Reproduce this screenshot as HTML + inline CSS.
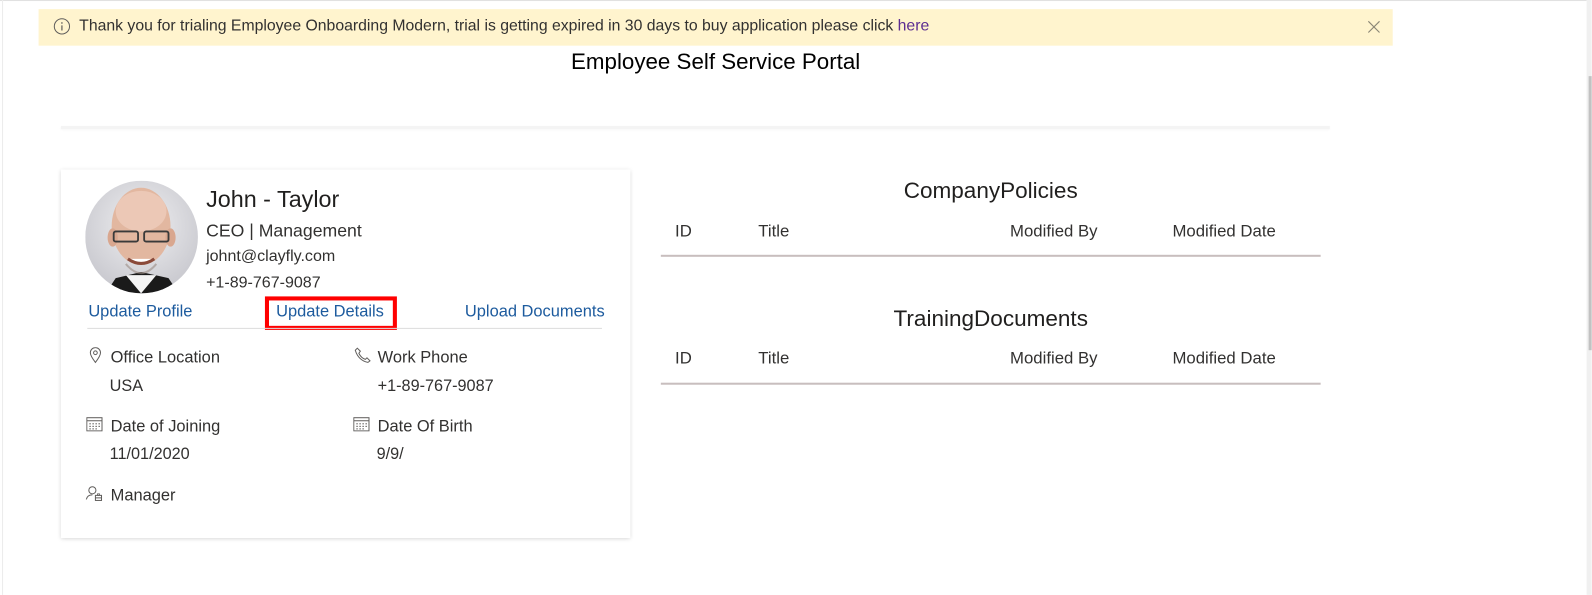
<!DOCTYPE html>
<html><head><meta charset="utf-8"><style>
*{margin:0;padding:0;box-sizing:border-box}
body{width:1592px;height:595px;background:#fff;font-family:"Liberation Sans",sans-serif;color:#323130;position:relative;overflow:hidden}
#w{position:absolute;left:0;top:0;width:1568px;height:586px;transform:scale(1.0151);transform-origin:0 0}
.a{position:absolute;white-space:nowrap}
.lnk{color:#1d5b9e;font-size:16.2px}
.lbl{font-size:16.2px;color:#323130}
.val{font-size:16px;color:#323130}
.th{font-size:16.5px;color:#323130}
</style></head><body><div id="w">
<div class="a" style="left:0;top:0;width:1563px;height:1px;background:#e1e1e1"></div>
<div class="a" style="left:2px;top:0;width:1px;height:586px;background:#ececec"></div>
<div class="a" style="left:1563px;top:0;width:5px;height:586px;background:#f0f0f0"></div>
<div class="a" style="left:1565px;top:75px;width:3px;height:270px;background:#c2c2c2"></div>

<div class="a" style="left:38px;top:9px;width:1334px;height:36px;background:#fff4ce"></div>
<svg class="a" style="left:52px;top:17px" width="18" height="18" viewBox="0 0 18 18"><circle cx="9" cy="9" r="7.5" fill="none" stroke="#605e5c" stroke-width="1"/><line x1="9" y1="8" x2="9" y2="13" stroke="#605e5c" stroke-width="1.2"/><circle cx="9" cy="5.6" r=".8" fill="#605e5c"/></svg>
<div class="a" style="left:78px;top:17px;font-size:15.55px;color:#323130">Thank you for trialing Employee Onboarding Modern, trial is getting expired in 30 days to buy application please click <span style="color:#5c2d91">here</span></div>
<svg class="a" style="left:1347px;top:20px" width="13" height="13" viewBox="0 0 13 13"><path d="M1 1L12 12M12 1L1 12" stroke="#8a8676" stroke-width="1.1"/></svg>

<div class="a" style="left:0;width:1410px;top:48px;text-align:center;font-size:22px;color:#000">Employee Self Service Portal</div>
<div class="a" style="left:60px;top:124px;width:1250px;height:3px;background:#f4f4f4;box-shadow:0 1px 2px rgba(0,0,0,.04)"></div>

<div class="a" style="left:60px;top:167px;width:561px;height:363px;background:#fff;box-shadow:0 1px 4px rgba(0,0,0,.18)"></div>
<svg class="a" style="left:84px;top:178px" width="111" height="111" viewBox="0 0 111 111">
<defs><clipPath id="c"><circle cx="55.5" cy="55.5" r="55.5"/></clipPath><radialGradient id="g" cx="50%" cy="40%" r="60%"><stop offset="0" stop-color="#f0f0f2"/><stop offset="1" stop-color="#c9c9cf"/></radialGradient></defs>
<g clip-path="url(#c)"><rect width="111" height="111" fill="url(#g)"/>
<path d="M20 111L30 96L55 90L82 96L92 111Z" fill="#1a1a1a"/>
<path d="M40 93L55 111L70 93Z" fill="#f4f4f4"/>
<ellipse cx="55" cy="45" rx="29" ry="38" fill="#e2b7a0"/>
<ellipse cx="55" cy="30" rx="25" ry="20" fill="#ecc8b6"/>
<ellipse cx="27" cy="56" rx="5" ry="9" fill="#d9a78f"/><ellipse cx="84" cy="56" rx="5" ry="9" fill="#d9a78f"/>
<rect x="28" y="50" width="24" height="10" rx="2" fill="none" stroke="#3a3a3a" stroke-width="1.8"/><rect x="58" y="50" width="24" height="10" rx="2" fill="none" stroke="#3a3a3a" stroke-width="1.8"/>
<path d="M42 77Q55 86 68 77" stroke="#8a4a3a" stroke-width="3" fill="#fff"/>
<path d="M40 82Q55 100 70 82" stroke="#9b8c84" stroke-width="2" fill="none" opacity=".6"/></g></svg>
<div class="a" style="left:203px;top:183px;font-size:23px;color:#201f1e">John - Taylor</div>
<div class="a" style="left:203px;top:217px;font-size:17.4px;color:#323130">CEO | Management</div>
<div class="a" style="left:203px;top:244px;font-size:15.8px;color:#323130">johnt@clayfly.com</div>
<div class="a" style="left:203px;top:270px;font-size:15.8px;color:#323130">+1-89-767-9087</div>
<div class="a lnk" style="left:87px;top:298px">Update Profile</div>
<div class="a lnk" style="left:272px;top:298px">Update Details</div>
<div class="a lnk" style="left:458px;top:298px">Upload Documents</div>
<div class="a" style="left:261px;top:292px;width:130px;height:33px;border:4px solid #f00"></div>
<div class="a" style="left:86px;top:323px;width:507px;height:1px;background:#dcdcdc"></div>

<svg class="a" style="left:87px;top:342px" width="14" height="16" viewBox="0 0 14 16"><path d="M7 15C7 15 2 8.5 2 5.5A5 5 0 0 1 12 5.5C12 8.5 7 15 7 15Z" fill="none" stroke="#605e5c" stroke-width="1"/><circle cx="7" cy="5.5" r="1.8" fill="none" stroke="#605e5c"/></svg>
<div class="a lbl" style="left:109px;top:343px">Office Location</div>
<div class="a val" style="left:108px;top:372px">USA</div>
<svg class="a" style="left:348px;top:342px" width="18" height="16" viewBox="0 0 18 16"><path d="M4 1L7 4L5.5 6Q8 11 12 12L13.5 10.5L16.5 13.5L14.5 15Q5 13 2 3Z" fill="none" stroke="#605e5c" stroke-width="1"/></svg>
<div class="a lbl" style="left:372px;top:343px">Work Phone</div>
<div class="a val" style="left:372px;top:372px">+1-89-767-9087</div>

<svg class="a" style="left:85px;top:410px" width="16" height="15" viewBox="0 0 16 15"><rect x=".5" y="1.5" width="15" height="13" fill="none" stroke="#605e5c"/><line x1=".5" y1="4.5" x2="15.5" y2="4.5" stroke="#605e5c"/><g fill="#605e5c"><rect x="3" y="7" width="1.5" height="1"/><rect x="6" y="7" width="1.5" height="1"/><rect x="9" y="7" width="1.5" height="1"/><rect x="12" y="7" width="1.5" height="1"/><rect x="3" y="9.5" width="1.5" height="1"/><rect x="6" y="9.5" width="1.5" height="1"/><rect x="9" y="9.5" width="1.5" height="1"/><rect x="12" y="9.5" width="1.5" height="1"/><rect x="3" y="12" width="1.5" height="1"/><rect x="6" y="12" width="1.5" height="1"/><rect x="9" y="12" width="1.5" height="1"/></g></svg>
<div class="a lbl" style="left:109px;top:411px">Date of Joining</div>
<div class="a val" style="left:108px;top:439px">11/01/2020</div>
<svg class="a" style="left:348px;top:410px" width="16" height="15" viewBox="0 0 16 15"><rect x=".5" y="1.5" width="15" height="13" fill="none" stroke="#605e5c"/><line x1=".5" y1="4.5" x2="15.5" y2="4.5" stroke="#605e5c"/><g fill="#605e5c"><rect x="3" y="7" width="1.5" height="1"/><rect x="6" y="7" width="1.5" height="1"/><rect x="9" y="7" width="1.5" height="1"/><rect x="12" y="7" width="1.5" height="1"/><rect x="3" y="9.5" width="1.5" height="1"/><rect x="6" y="9.5" width="1.5" height="1"/><rect x="9" y="9.5" width="1.5" height="1"/><rect x="12" y="9.5" width="1.5" height="1"/><rect x="3" y="12" width="1.5" height="1"/><rect x="6" y="12" width="1.5" height="1"/><rect x="9" y="12" width="1.5" height="1"/></g></svg>
<div class="a lbl" style="left:372px;top:411px">Date Of Birth</div>
<div class="a val" style="left:371px;top:439px">9/9/</div>

<svg class="a" style="left:84px;top:478px" width="18" height="16" viewBox="0 0 18 16"><circle cx="7" cy="5" r="3.5" fill="none" stroke="#605e5c"/><path d="M1 14Q2 9.5 7 9.5" fill="none" stroke="#605e5c"/><rect x="10" y="10" width="6" height="5" fill="none" stroke="#605e5c"/><line x1="10" y1="12.5" x2="16" y2="12.5" stroke="#605e5c"/><rect x="12" y="8.5" width="2" height="1.5" fill="none" stroke="#605e5c" stroke-width=".8"/></svg>
<div class="a lbl" style="left:109px;top:479px">Manager</div>

<div class="a" style="left:651px;width:650px;top:175px;text-align:center;font-size:22.2px;color:#201f1e">CompanyPolicies</div>
<div class="a th" style="left:665px;top:219px">ID</div>
<div class="a th" style="left:747px;top:219px">Title</div>
<div class="a th" style="left:995px;top:219px">Modified By</div>
<div class="a th" style="left:1155px;top:219px">Modified Date</div>
<div class="a" style="left:651px;top:251px;width:650px;height:2px;background:#c8bebe"></div>

<div class="a" style="left:651px;width:650px;top:301px;text-align:center;font-size:22.2px;color:#201f1e">TrainingDocuments</div>
<div class="a th" style="left:665px;top:344px">ID</div>
<div class="a th" style="left:747px;top:344px">Title</div>
<div class="a th" style="left:995px;top:344px">Modified By</div>
<div class="a th" style="left:1155px;top:344px">Modified Date</div>
<div class="a" style="left:651px;top:377px;width:650px;height:2px;background:#c8bebe"></div>
</div></body></html>
